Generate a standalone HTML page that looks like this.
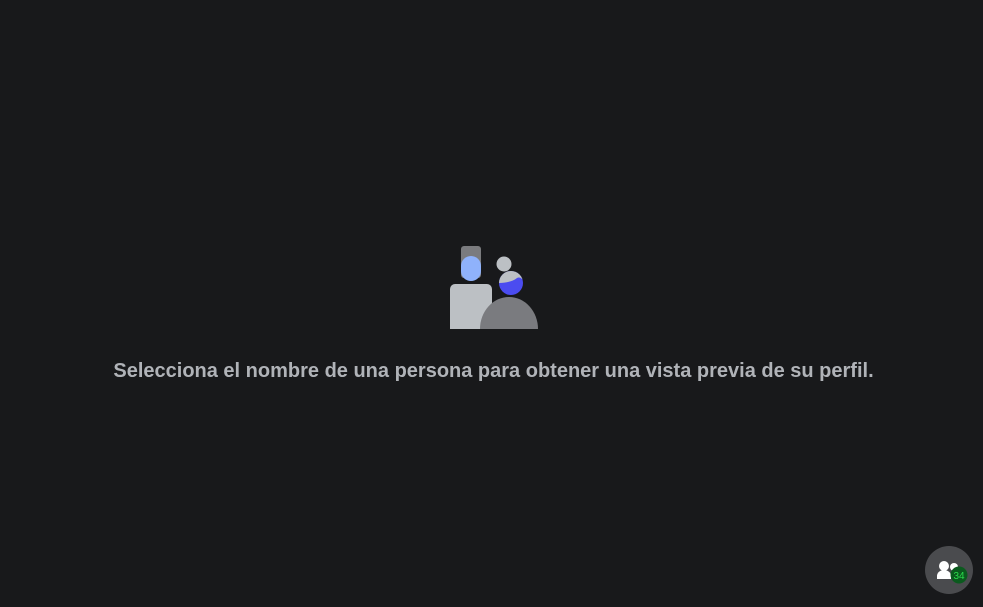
<!DOCTYPE html>
<html><head><meta charset="utf-8"><style>
html,body{margin:0;padding:0;width:983px;height:607px;background:#18191b;overflow:hidden;font-family:"Liberation Sans",sans-serif}
.t{position:absolute;left:0;width:987px;top:360px;text-align:center;color:#b0b3b8;font-weight:bold;font-size:20px}
svg{position:absolute;left:0;top:0}
</style></head><body>
<svg width="983" height="607">
<defs><clipPath id="c"><circle cx="511" cy="283" r="12"/></clipPath></defs>
<rect x="461" y="246" width="20" height="32" rx="3" fill="#7a7b7e"/>
<rect x="461" y="256" width="20" height="25" rx="10" fill="#8fb2fb"/>
<path d="M450 329V289a5 5 0 0 1 5-5h32a5 5 0 0 1 5 5V329Z" fill="#bcc0c4"/>
<circle cx="504" cy="264" r="7.5" fill="#bcc0c4"/>
<circle cx="511" cy="283" r="12" fill="#4b4cf0"/>
<path clip-path="url(#c)" d="M497 270H525V283Q521 276 517 278Q511 283 497 283Z" fill="#bcc0c4"/>
<path d="M480 329a29 32 0 0 1 58 0Z" fill="#7a7b7f"/>
<circle cx="949" cy="570" r="24" fill="#4a4b4e"/>
<circle cx="944" cy="566" r="5" fill="#fff"/>
<path d="M937 579v-3a7 6 0 0 1 14 0v3Z" fill="#fff"/>
<circle cx="954" cy="567" r="4" fill="#fff"/>
<circle cx="959" cy="575" r="8.5" fill="#0b5a1e"/>
<text x="959" y="579" text-anchor="middle" font-family="Liberation Sans" font-size="10" fill="#2bdc4c">34</text>
</svg>
<div class="t">Selecciona el nombre de una persona para obtener una vista previa de su perfil.</div>
</body></html>
